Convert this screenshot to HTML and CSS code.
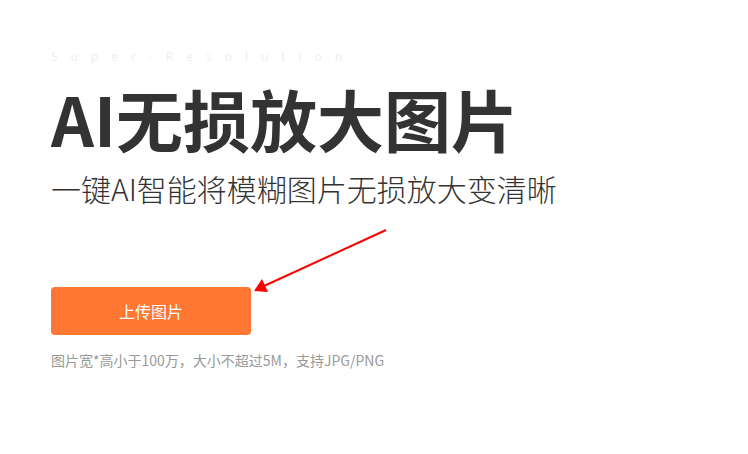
FILE: index.html
```html
<!DOCTYPE html>
<html lang="zh-CN">
<head>
<meta charset="utf-8">
<title>AI无损放大图片</title>
<link rel="stylesheet" href="styles.css">
</head>
<body>
<main class="hero">
  <div class="tag">Super-Resolution</div>
  <h1 class="title">AI无损放大图片</h1>
  <p class="subtitle">一键AI智能将模糊图片无损放大变清晰</p>
  <button class="upload" type="button">上传图片</button>
  <p class="hint">图片宽*高小于100万，大小不超过5M，支持JPG/PNG</p>
  <svg class="arrow" width="748" height="454" viewBox="0 0 748 454" aria-hidden="true">
    <line x1="386" y1="230" x2="264" y2="286" stroke="#f00" stroke-width="2"/>
    <polygon points="254,291 262,279 268,292" fill="#f00"/>
  </svg>
</main>
</body>
</html>
```

FILE: styles.css
```css
html, body {
  margin: 0;
  padding: 0;
  background: #fff;
}
body {
  width: 748px;
  height: 454px;
  overflow: hidden;
  font-family: "Noto Sans CJK SC", "Noto Sans", sans-serif;
}
.hero {
  position: relative;
  width: 748px;
  height: 454px;
  box-sizing: border-box;
  padding: 50px 0 0 51px;
  display: flex;
  flex-direction: column;
  align-items: flex-start;
}
.tag {
  font-family: "Open Sans", "Noto Sans", sans-serif;
  font-size: 12px;
  line-height: 14px;
  letter-spacing: 13px;
  color: #eeeeee;
}
.title {
  margin: 21px 0 0 0;
  font-size: 67px;
  line-height: 66px;
  font-weight: 700;
  color: #333;
  letter-spacing: 0;
}
.subtitle {
  margin: 20px 0 0 0;
  font-size: 30px;
  line-height: 34px;
  font-weight: 300;
  color: #333;
}
.upload {
  margin: 82px 0 0 0;
  width: 200px;
  height: 48px;
  border: 0;
  border-radius: 4px;
  background: #ff7733;
  color: #fff;
  font-family: "Noto Sans CJK SC", sans-serif;
  font-size: 16px;
  padding: 0;
  cursor: pointer;
}
.hint {
  margin: 15px 0 0 0;
  font-size: 14px;
  line-height: 20px;
  color: #999;
}
.arrow {
  position: absolute;
  left: 0;
  top: 0;
  pointer-events: none;
}
```
